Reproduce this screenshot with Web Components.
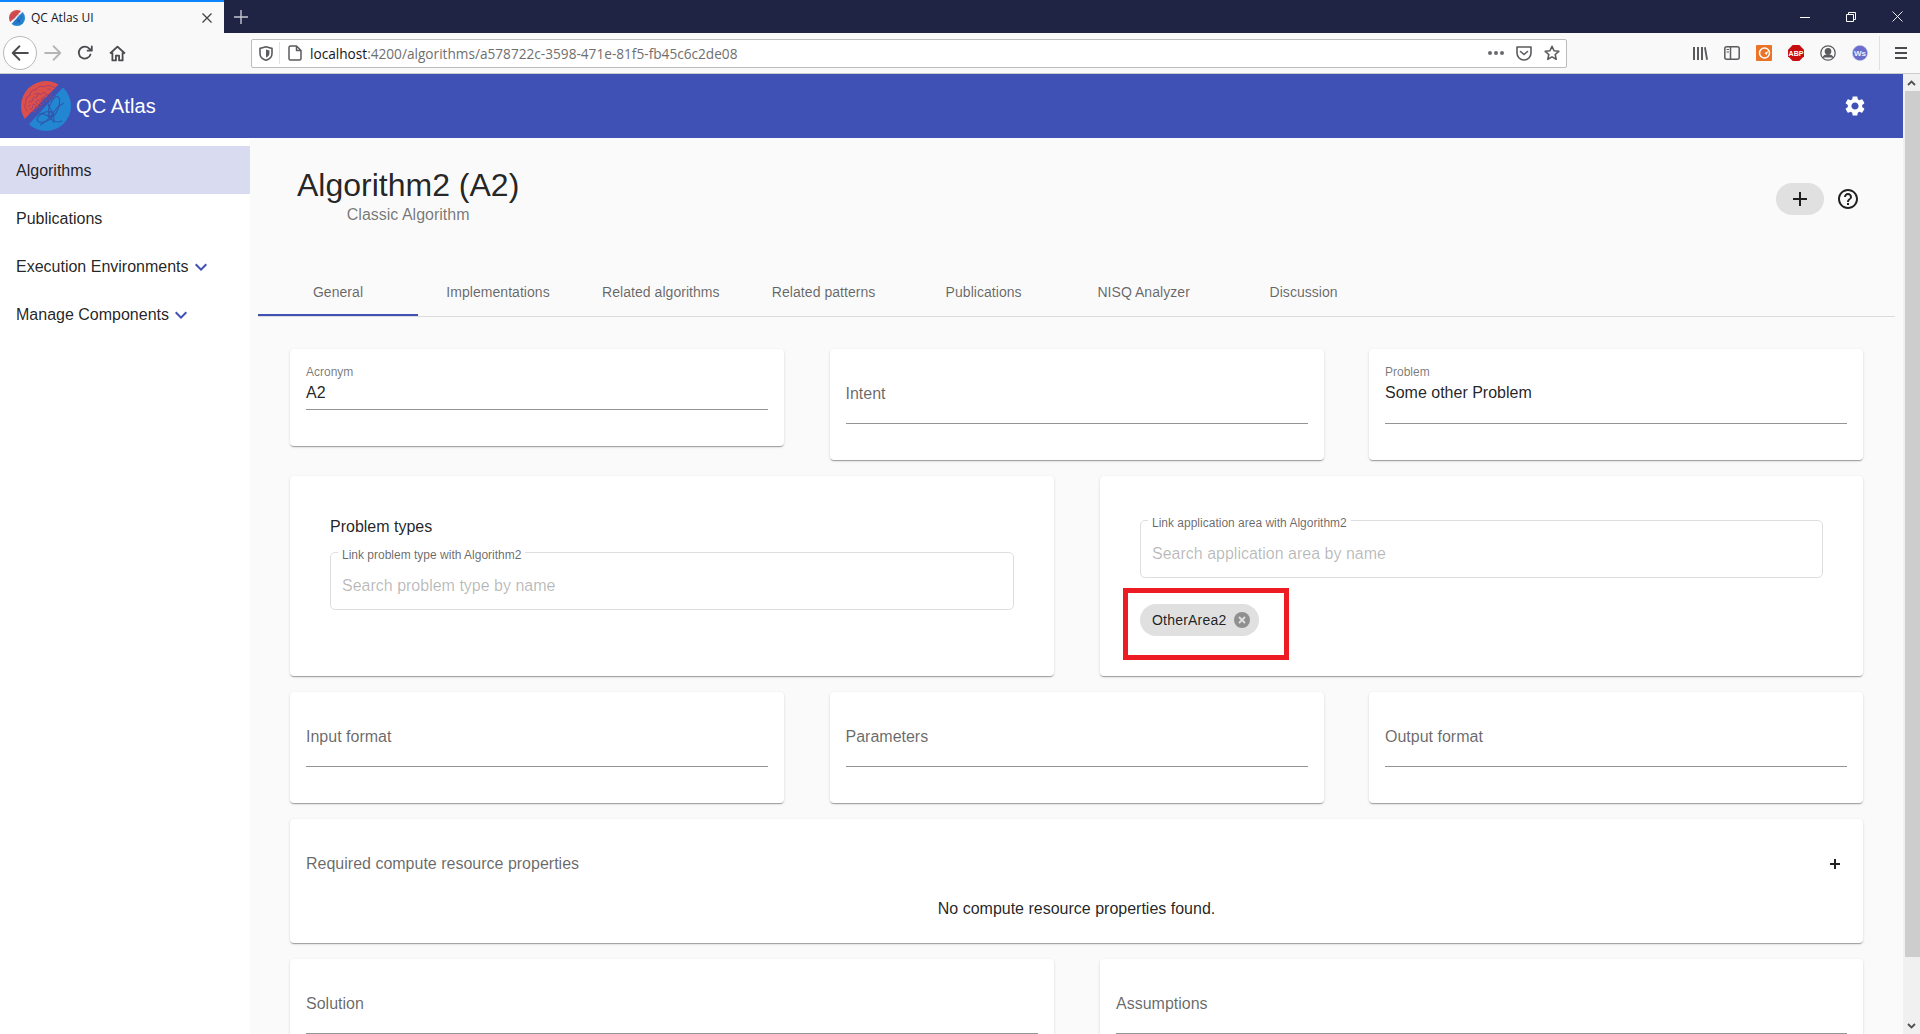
<!DOCTYPE html>
<html lang="en"><head><meta charset="utf-8"><title>QC Atlas UI</title>
<style>
html,body{margin:0;padding:0;height:1034px;overflow:hidden;background:#fafafa}
body{font-family:"Liberation Sans",Arial,sans-serif;color:rgba(0,0,0,.87);display:flex;flex-direction:column}
</style></head><body>
<qc-browser></qc-browser>
<qc-app>
  <qc-header slot="header"></qc-header>
  <qc-nav slot="nav">
    <qc-nav-item active>Algorithms</qc-nav-item>
    <qc-nav-item>Publications</qc-nav-item>
    <qc-nav-item expandable>Execution Environments</qc-nav-item>
    <qc-nav-item expandable>Manage Components</qc-nav-item>
  </qc-nav>
  <qc-title-bar heading="Algorithm2 (A2)" sub="Classic Algorithm"></qc-title-bar>
  <qc-tabs></qc-tabs>
  <qc-row cols="3" top>
    <qc-field-card label="Acronym" value="A2" short></qc-field-card>
    <qc-field-card placeholder="Intent"></qc-field-card>
    <qc-field-card label="Problem" value="Some other Problem"></qc-field-card>
  </qc-row>
  <qc-row cols="2">
    <qc-card pad="41px 40px 16px 40px">
      <qc-heading>Problem types</qc-heading>
      <qc-outline label="Link problem type with Algorithm2" placeholder="Search problem type by name"></qc-outline>
    </qc-card>
    <qc-card pad="44px 40px 16px 40px">
      <qc-outline label="Link application area with Algorithm2" placeholder="Search application area by name"></qc-outline>
      <qc-chip marked>OtherArea2</qc-chip>
    </qc-card>
  </qc-row>
  <qc-row cols="3">
    <qc-field-card placeholder="Input format"></qc-field-card>
    <qc-field-card placeholder="Parameters"></qc-field-card>
    <qc-field-card placeholder="Output format"></qc-field-card>
  </qc-row>
  <qc-row cols="1"><qc-resources></qc-resources></qc-row>
  <qc-row cols="2">
    <qc-field-card placeholder="Solution"></qc-field-card>
    <qc-field-card placeholder="Assumptions"></qc-field-card>
  </qc-row>
</qc-app>
<script>
const def=(name,html,cls)=>{
  const t=document.createElement('template');t.innerHTML=html;
  customElements.define(name,class extends HTMLElement{
    constructor(){super();this.attachShadow({mode:'open'}).appendChild(t.content.cloneNode(true))}
    connectedCallback(){cls&&cls.call(this,this.shadowRoot)}
  });
};
const LOGO=`<svg viewBox="0 0 50 50" width="100%" height="100%">
<defs><clipPath id="c"><circle cx="25" cy="25" r="25"/></clipPath>
<clipPath id="b"><path d="M52.500-5L55 55H-2.800Z"/></clipPath></defs>
<g clip-path="url(#c)">
<path d="M-5-5H45.800L-5 46.900Z" fill="#dc4f4b"/>
<path d="M52.500-5L55 55H-2.800Z" fill="#2386d2"/>
<g fill="none" stroke="#9a4272" stroke-width=".9" stroke-linecap="round" stroke-linejoin="round">
<path d="M6 30c-2-3-3-6-1-8-1-4 1-7 4-7.500 0-4 3-6 6-5.500 1-3 5-4.500 8-3 3-2 7-2 9 0 2 0 3 1 3 2"/>
<path d="M9 28c2 1 3-1 2.500-2.500s1-3 2.500-2-1 3 1 3.500 3-2 2-3.500-2.500-2-1.500-3.500 3-1 3.500.5-1 3 1 3 3-1.500 2-3-2.500-2-1-3.500 3-.5 3.500 1 .5 3 2 2 2.500-2 1.500-3.500-2-2-.5-3 3 .5 3 2 1 1.500 2 .5"/>
<path d="M8 21c1.500-1 2.500 0 3.500-1s-.5-2.500 1-3.500 2.500.5 3.500-.5-.5-2.500 1-3 2.500 1 3.500 0 2-2 3.500-1 .5 2 2 2 2-1.500 3.500-.5"/>
<path d="M9 32c1.500-.5 2.500-2 4-1.500s2.500-1 2-2.500 1-2.500 2.500-2 2-1 2-2.500M20 19c1-1 2 0 3-1s0-2 1-3M14 13c1 0 2-1 3-1M27 8c1 0 2 0 3 1M7 25c1 0 2 0 2-1"/>
</g>
<g clip-path="url(#b)" fill="none" stroke="#2f58ad" stroke-width="1.100">
<ellipse cx="24" cy="36" rx="8.500" ry="4.500" transform="rotate(-25 24 36)"/>
<ellipse cx="33" cy="26" rx="11" ry="4.500" transform="rotate(-70 33 26)"/>
<path d="M16 33c6-1 9 0 13 4s7 5 12 3M27 15c-1 6 0 10 3 14s4 8 2 13M19 44c4-2 9-6 13-12s7-8 11-10"/>
<circle cx="30" cy="33" r="2.300"/>
</g></g></svg>`;

def('qc-logo',`<style>:host{display:inline-block;flex:none}</style>${LOGO}`);

def('qc-browser',`<style>
:host{display:block;flex:none;font-family:"Open Sans","Noto Sans",sans-serif}
.strip{height:33px;background:#1f2344;display:flex;color:#fff}
.tab{width:224px;box-sizing:border-box;background:#f9f9fa;border-top:2px solid #0a84ff;display:flex;align-items:center;padding:0 11px 0 9px;color:#15141a;font-size:12px}
.tab qc-logo{width:16px;height:16px;margin-right:6px}
.tab span{flex:1}
.slot{display:flex;align-items:center;justify-content:center}
.plus{width:34px}
.sp{flex:1}
.win{width:46px}
.bar{height:40px;background:#f9f9fa;border-bottom:1px solid #ccc;display:flex;align-items:center;padding-left:3px}
.back{width:32px;height:32px;border:1px solid #b8b8b8;border-radius:50%;background:#fff;display:flex;align-items:center;justify-content:center;flex:none}
.ic{width:32px;height:32px;flex:none}
.url{margin-left:118px;flex:1;height:29px;box-sizing:border-box;background:#fff;border:1px solid #bcbcbc;border-radius:2px;display:flex;align-items:center;font-size:13.650px;color:#15141a;min-width:0}
.url .shield{width:27px;flex:none;justify-content:center}
.url .divi{width:1px;height:22px;background:#e2e2e2;flex:none}
.url .page{width:30px;flex:none}
.url b{font-weight:400;color:#15141a}
.url i{font-style:normal;color:#6f6f6f}
.t{flex:1;white-space:nowrap;overflow:hidden}
.r{width:28px;flex:none}
.right{margin-left:117px;display:flex;align-items:center;padding-right:3px}
.sep{width:1px;height:34px;background:#e0e0e0;margin:0 5px 0 3px}
svg{display:block}
</style>
<div class="strip">
 <div class="tab"><qc-logo></qc-logo><span>QC Atlas UI</span>
  <svg width="12" height="12" viewBox="0 0 12 12" stroke="#444" stroke-width="1.300"><path d="M1.500 1.500l9 9M10.500 1.500l-9 9"/></svg></div>
 <div class="slot plus"><svg width="14" height="14" viewBox="0 0 14 14" stroke="#c6c7d0" stroke-width="1.400"><path d="M7 0v14M0 7h14"/></svg></div>
 <div class="sp"></div>
 <div class="slot win"><svg width="10" height="10" viewBox="0 0 10 10" stroke="#fff"><path d="M0 5.500h10"/></svg></div>
 <div class="slot win"><svg width="10" height="10" viewBox="0 0 10 10" fill="none" stroke="#fff"><path d="M.5 2.500h7v7h-7zM2.500 2.500v-2h7v7h-2"/></svg></div>
 <div class="slot win"><svg width="11" height="11" viewBox="0 0 11 11" stroke="#fff" stroke-width=".9"><path d="M.5.500l10 10M10.500.500l-10 10"/></svg></div>
</div>
<div class="bar">
 <div class="back"><svg width="18" height="18" viewBox="0 0 16 16" fill="none" stroke="#4a4a4f" stroke-width="1.600" stroke-linecap="round" stroke-linejoin="round"><path d="M15 8H1.500M7.500 2L1.500 8l6 6"/></svg></div>
 <div class="slot ic"><svg width="18" height="18" viewBox="0 0 16 16" fill="none" stroke="#b5b5b7" stroke-width="1.600" stroke-linecap="round" stroke-linejoin="round"><path d="M1 8h13.500M8.500 2l6 6-6 6"/></svg></div>
 <div class="slot ic"><svg width="16" height="16" viewBox="0 0 16 16" fill="none" stroke="#4a4a4f" stroke-width="1.800" stroke-linecap="round" stroke-linejoin="round"><path d="M13.500 9.500A6 6 0 1 1 12.600 4L14.500 5.500M14.800 1.500v4.200h-4.200"/></svg></div>
 <div class="slot ic"><svg width="17" height="17" viewBox="0 0 16 16" fill="none" stroke="#4a4a4f" stroke-width="1.700" stroke-linejoin="round"><path d="M1 8l7-6.500L15 8M3.200 7v7.500h3.300V10h3v4.500h3.300V7"/></svg></div>
 <div class="url">
  <div class="slot shield"><svg width="14" height="15" viewBox="0 0 14 15"><path d="M7 .8l6 1.600v5c0 3.500-2.600 5.800-6 6.900C3.600 13.200 1 10.900 1 7.400v-5z" fill="none" stroke="#5b5b5f" stroke-width="1.600"/><path d="M7 3.500l3.400.9v3C10.400 9.400 9 10.600 7 11.400z" fill="#5b5b5f"/></svg></div>
  <div class="divi"></div>
  <div class="slot page"><svg width="14" height="16" viewBox="0 0 14 16" fill="none" stroke="#5b5b5f" stroke-width="1.500" stroke-linejoin="round"><path d="M2.500 1h6l4.500 4.500V13.500a1.500 1.500 0 0 1-1.500 1.500h-9A1.500 1.500 0 0 1 1 13.500V2.500A1.500 1.500 0 0 1 2.500 1zM8.500 1v4.500H13"/></svg></div>
  <div class="t"><b>localhost</b><i>:4200/algorithms/a578722c-3598-471e-81f5-fb45c6c2de08</i></div>
  <div class="slot r"><svg width="16" height="4" viewBox="0 0 16 4" fill="#6a6a6e"><circle cx="2" cy="2" r="2"/><circle cx="8" cy="2" r="2"/><circle cx="14" cy="2" r="2"/></svg></div>
  <div class="slot r"><svg width="16" height="15" viewBox="0 0 16 15" fill="none" stroke="#5b5b5f" stroke-width="1.600" stroke-linecap="round" stroke-linejoin="round"><path d="M1 1h14v6a7 7 0 0 1-14 0zM4.500 5.500L8 8.500l3.500-3"/></svg></div>
  <div class="slot r"><svg width="16" height="16" viewBox="0 0 16 16" fill="none" stroke="#5b5b5f" stroke-width="1.600" stroke-linejoin="round"><path d="M8 1.300l2 4.500 4.800.5-3.600 3.200 1 4.800L8 11.900l-4.200 2.400 1-4.800L1.200 6.300 6 5.800z"/></svg></div>
 </div>
 <div class="right">
  <div class="slot ic"><svg width="16" height="16" viewBox="0 0 16 16" fill="#5b5b5f"><path d="M1 2h2v13H1zM5 2h2v13H5zM9 2h2v13H9zM12 2.500l1.800-.5 2.200 12.500-1.800.5z"/></svg></div>
  <div class="slot ic"><svg width="16" height="14" viewBox="0 0 16 14" fill="none" stroke="#5b5b5f" stroke-width="1.500"><rect x=".8" y=".8" width="14.400" height="12.400" rx="2"/><path d="M6.500 1v12"/><path d="M2.500 3.500h2.500M2.500 6h2.500" stroke-width="1.200"/></svg></div>
  <div class="slot ic"><svg width="16" height="16" viewBox="0 0 16 16"><rect width="16" height="16" rx="1" fill="#ea7328"/><circle cx="8.500" cy="8" r="5" fill="none" stroke="#fff" stroke-width="1.500"/><path d="M8.500 8l4-2-2 4z" fill="#fff"/></svg></div>
  <div class="slot ic"><svg width="16" height="16" viewBox="0 0 16 16"><path d="M4.700 0h6.600L16 4.700v6.600L11.300 16H4.700L0 11.300V4.700z" fill="#c70d0d"/><text x="8" y="10.600" text-anchor="middle" font-family="Liberation Sans" font-weight="700" font-size="7" fill="#fff">ABP</text></svg></div>
  <div class="slot ic"><svg width="16" height="16" viewBox="0 0 16 16" fill="none" stroke="#5b5b5f" stroke-width="1.300"><circle cx="8" cy="8" r="7.200"/><circle cx="8" cy="6.300" r="2.700" fill="#5b5b5f"/><path d="M3 12.500c1-2 3-2.700 5-2.700s4 .7 5 2.700" fill="#5b5b5f"/></svg></div>
  <div class="slot ic"><svg width="16" height="16" viewBox="0 0 16 16"><circle cx="8" cy="8" r="7.500" fill="#6a6dcc"/><circle cx="8" cy="8" r="7.500" fill="none" stroke="#b7b8e6" stroke-dasharray="1.500 1"/><text x="8" y="10.800" text-anchor="middle" font-family="Liberation Sans" font-weight="700" font-size="8" fill="#eeeeff">Ws</text></svg></div>
  <div class="sep"></div>
  <div class="slot ic"><svg width="14" height="12" viewBox="0 0 14 12" stroke="#4a4a4f" stroke-width="1.800"><path d="M1 1h12M1 6h12M1 11h12"/></svg></div>
 </div>
</div>`);

def('qc-app',`<style>
:host{display:flex;flex:1;min-height:0;overflow:hidden}
.col{flex:1;min-width:0;display:flex;flex-direction:column}
.body{flex:1;display:flex;min-height:0}
.main{flex:1;min-width:0;overflow:hidden}
.sb{width:17px;flex:none;background:#f0f0f0;display:flex;flex-direction:column;align-items:center}
.btn{height:17px;width:100%;display:flex;align-items:center;justify-content:center;flex:none}
.thumb{height:866px;width:15px;background:#cdcdcd;flex:none;margin-left:1px}
.fill{flex:1}
svg{display:block}
</style>
<div class="col"><slot name="header"></slot>
<div class="body"><slot name="nav"></slot><div class="main"><slot></slot></div></div></div>
<div class="sb">
<div class="btn"><svg width="9" height="6" viewBox="0 0 9 6" fill="none" stroke="#505050" stroke-width="1.800"><path d="M1 5l3.500-3.500L8 5"/></svg></div>
<div class="thumb"></div><div class="fill"></div>
<div class="btn"><svg width="9" height="6" viewBox="0 0 9 6" fill="none" stroke="#505050" stroke-width="1.800"><path d="M1 1l3.500 3.500L8 1"/></svg></div>
</div>`);

def('qc-header',`<style>
:host{display:flex;flex:none;height:64px;background:#3f51b5;color:#fff;align-items:center;padding:0 36px 0 21px}
qc-logo{width:50px;height:50px;margin-right:5px}
span{font-size:20px;flex:1;line-height:24px;letter-spacing:.12px}
svg{display:block}
</style><qc-logo></qc-logo><span>QC Atlas</span>
<svg width="24" height="24" viewBox="0 0 24 24" fill="#fff"><path d="M19.140 12.940c.04-.3.06-.61.06-.94 0-.32-.02-.64-.07-.94l2.030-1.580c.18-.14.23-.41.12-.61l-1.920-3.320c-.12-.22-.37-.29-.59-.22l-2.390.96c-.5-.38-1.030-.7-1.620-.94l-.36-2.540c-.04-.24-.24-.41-.48-.41h-3.840c-.24 0-.43.17-.47.41l-.36 2.540c-.59.24-1.130.57-1.620.94l-2.390-.96c-.22-.08-.47 0-.59.22L2.740 8.870c-.12.21-.08.47.12.61l2.030 1.580c-.05.3-.09.63-.09.94s.02.64.07.94l-2.030 1.580c-.18.14-.23.41-.12.61l1.920 3.320c.12.22.37.29.59.22l2.390-.96c.5.38 1.030.7 1.620.94l.36 2.540c.05.24.24.41.48.41h3.840c.24 0 .44-.17.47-.41l.36-2.540c.59-.24 1.130-.56 1.620-.94l2.390.96c.22.08.47 0 .59-.22l1.920-3.320c.12-.22.07-.47-.12-.61l-2.010-1.580zM12 15.600c-1.980 0-3.600-1.620-3.600-3.600s1.620-3.600 3.600-3.600 3.600 1.620 3.600 3.600-1.620 3.600-3.600 3.600z"/></svg>`);

def('qc-nav',`<style>:host{display:block;width:250px;flex:none;background:#fff;padding-top:8px;box-sizing:border-box}</style><slot></slot>`);

def('qc-nav-item',`<style>
:host{display:flex;height:48px;box-sizing:border-box;padding:1px 0 0 16px;align-items:center;font-size:16px;color:rgba(0,0,0,.87)}
:host([active]){background:#d9dbf0}
svg{display:none}
:host([expandable]) svg{display:block}
</style><slot></slot><svg width="24" height="24" viewBox="0 0 24 24" fill="#3f51b5"><path d="M16.590 8.590L12 13.170 7.410 8.590 6 10l6 6 6-6z"/></svg>`);

def('qc-title-bar',`<style>
:host{display:flex;height:130px;box-sizing:border-box;padding:27px 43px 0 47px}
.h{flex:1}
.w{display:inline-block;text-align:center}
h1{margin:0;font-size:32px;line-height:40px;font-weight:400;color:rgba(0,0,0,.87)}
p{margin:1px 0 0;font-size:16px;line-height:18px;color:rgba(0,0,0,.54)}
.a{display:flex;align-items:center;height:32px;margin-top:18px}
.add{width:48px;height:32px;border-radius:16px;background:#e0e0e0;display:flex;align-items:center;justify-content:center}
.help{margin-left:12px}
svg{display:block}
</style><div class="h"><div class="w"><h1></h1><p></p></div></div>
<div class="a"><div class="add"><svg width="24" height="24" viewBox="0 0 24 24" fill="rgba(0,0,0,.87)"><path d="M19 13h-6v6h-2v-6H5v-2h6V5h2v6h6v2z"/></svg></div>
<svg class="help" width="24" height="24" viewBox="0 0 24 24" fill="rgba(0,0,0,.87)"><path d="M11 18h2v-2h-2v2zm1-16C6.480 2 2 6.480 2 12s4.480 10 10 10 10-4.480 10-10S17.520 2 12 2zm0 18c-4.410 0-8-3.590-8-8s3.590-8 8-8 8 3.590 8 8-3.590 8-8 8zm0-14c-2.210 0-4 1.790-4 4h2c0-1.100.9-2 2-2s2 .9 2 2c0 2-3 1.750-3 5h2c0-2.250 3-2.500 3-5 0-2.210-1.790-4-4-4z"/></svg></div>`,
function(r){r.querySelector('h1').textContent=this.getAttribute('heading');r.querySelector('p').textContent=this.getAttribute('sub')});

def('qc-tabs',`<style>
:host{display:flex;margin:0 8px;height:49px;box-sizing:border-box;border-bottom:1px solid rgba(0,0,0,.12)}
div{min-width:160px;padding:0 24px;height:48px;box-sizing:border-box;display:flex;align-items:center;justify-content:center;font-size:14px;letter-spacing:.05px;color:rgba(0,0,0,.6)}
.on{box-shadow:inset 0 -2px 0 #3f51b5}
</style><div class="on">General</div><div>Implementations</div><div>Related algorithms</div><div>Related patterns</div><div>Publications</div><div>NISQ Analyzer</div><div>Discussion</div>`);

def('qc-row',`<style>
:host{display:flex;gap:45.500px;margin:0 40px 16px 40px}
:host([cols="2"]){display:grid;grid-template-columns:764px 763px;gap:46px}
:host([top]){margin-top:32px;align-items:flex-start}
::slotted(*){flex:1 1 0;min-width:0}
::slotted(qc-card){height:200px}
</style><slot></slot>`);

def('qc-card',`<style>
:host{display:block;background:#fff;border-radius:4px;box-sizing:border-box;box-shadow:0 2px 1px -1px rgba(0,0,0,.2),0 1px 1px 0 rgba(0,0,0,.14),0 1px 3px 0 rgba(0,0,0,.12)}
</style><slot></slot>`,function(){this.style.padding=this.getAttribute('pad')||'16px'});

def('qc-field-card',`<style>
:host{display:block;background:#fff;border-radius:4px;box-sizing:border-box;padding:16px 16px 36px;box-shadow:0 2px 1px -1px rgba(0,0,0,.2),0 1px 1px 0 rgba(0,0,0,.14),0 1px 3px 0 rgba(0,0,0,.12)}
.f{height:59px;box-sizing:border-box;border-bottom:1px solid rgba(0,0,0,.42)}
:host([short]) .f{height:45px}
.l{font-size:12px;line-height:14px;height:14px;color:rgba(0,0,0,.54);margin-bottom:5px}
.v{font-size:16px;line-height:18px;color:rgba(0,0,0,.87)}
.p{padding-top:1px;color:rgba(0,0,0,.6)}
</style><div class="f"><div class="l"></div><div class="v"></div></div>`,
function(r){r.querySelector('.l').textContent=this.getAttribute('label')||'';
 const v=r.querySelector('.v');
 if(this.hasAttribute('placeholder')){v.textContent=this.getAttribute('placeholder');v.classList.add('p')}
 else v.textContent=this.getAttribute('value')});

def('qc-heading',`<style>:host{display:block;font-size:16px;line-height:20px;margin-bottom:15px;color:rgba(0,0,0,.87)}</style><slot></slot>`);

def('qc-outline',`<style>
:host{display:block;position:relative;height:58px;box-sizing:border-box;border:1px solid #dedede;border-radius:5px;padding:24px 11px 0}
.l{position:absolute;left:7px;top:-5px;background:#fff;padding:0 4px;font-size:12px;line-height:14px;color:rgba(0,0,0,.6)}
.p{font-size:16px;line-height:18px;color:rgba(0,0,0,.28)}
</style><div class="l"></div><div class="p"></div>`,
function(r){r.querySelector('.l').textContent=this.getAttribute('label');r.querySelector('.p').textContent=this.getAttribute('placeholder')});

def('qc-chip',`<style>
:host{display:inline-flex;position:relative;align-items:center;height:32px;margin-top:26px;padding:0 9px 0 12px;border-radius:16px;background:#e0e0e0;font-size:14px;letter-spacing:.2px;color:rgba(0,0,0,.87)}
svg{display:block;margin-left:8px}
.mark{display:none;position:absolute;left:-17px;top:-16px;width:166px;height:72px;box-sizing:border-box;border:5px solid #ed1c24}
:host([marked]) .mark{display:block}
</style><slot></slot><svg width="16" height="16" viewBox="0 0 16 16"><circle cx="8" cy="8" r="8" fill="#8f8f8f"/><path d="M5 5l6 6M11 5l-6 6" stroke="#e0e0e0" stroke-width="1.800"/></svg><div class="mark"></div>`);

def('qc-resources',`<style>
:host{display:block;background:#fff;border-radius:4px;height:124px;box-sizing:border-box;padding:36px 16px 0;box-shadow:0 2px 1px -1px rgba(0,0,0,.2),0 1px 1px 0 rgba(0,0,0,.14),0 1px 3px 0 rgba(0,0,0,.12)}
.h{display:flex;align-items:center;justify-content:space-between;height:18px;font-size:16px;color:rgba(0,0,0,.6);padding-right:7px}
.e{margin-top:27px;text-align:center;font-size:16px;line-height:18px;color:rgba(0,0,0,.87)}
svg{display:block}
</style><div class="h"><span>Required compute resource properties</span><svg width="10" height="10" viewBox="0 0 10 10" stroke="#222" stroke-width="2"><path d="M5 0v10M0 5h10"/></svg></div>
<div class="e">No compute resource properties found.</div>`);
</script>
</body></html>
